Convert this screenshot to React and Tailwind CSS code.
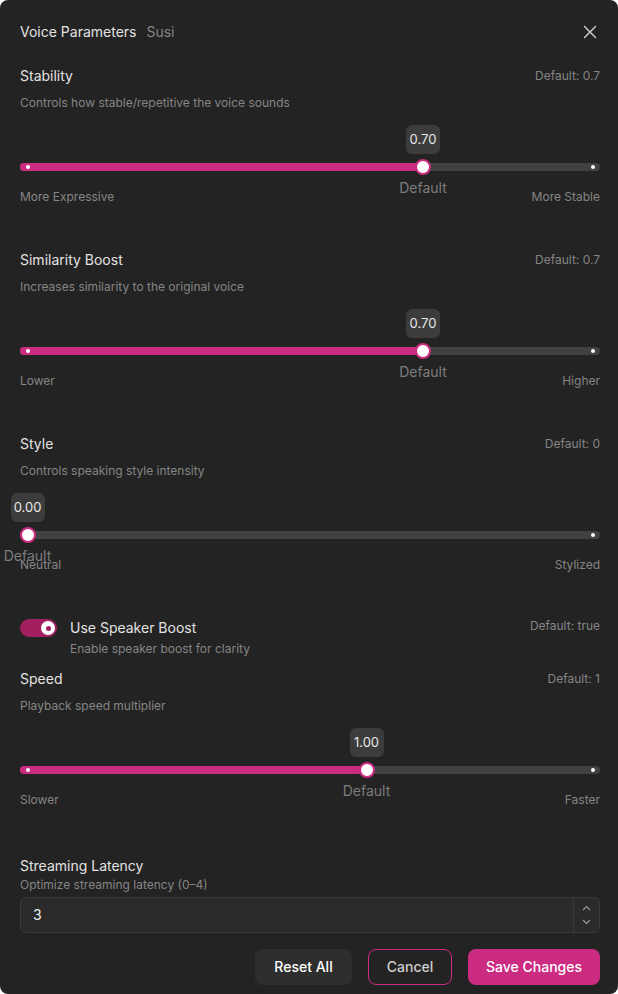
import React from "react";

const FONT = { fontFamily: "Inter, 'Noto Sans', sans-serif" };

function Slider({ frac, value, left, right }) {
  const x = 7.5 + frac * 565;
  return (
    <div className="relative mt-[14px] pt-[38px]">
      <div className="relative h-2 rounded-full bg-[#414141]">
        <div className="absolute left-0 top-0 h-2 rounded-full bg-[#cc2b82]" style={{ width: x }} />
        <div className="absolute left-[6px] top-[2px] h-1 w-1 rounded-full bg-white" />
        <div className="absolute right-[5px] top-[2px] h-1 w-1 rounded-full bg-white" />
      </div>
      <div
        className="absolute top-0 flex h-[29px] w-[34px] items-center justify-center rounded-md bg-[#3c3c3c] text-[13px] text-[#e8e8e8]"
        style={{ left: x - 17 }}
      >
        {value}
      </div>
      <div
        className="absolute top-[34px] h-4 w-4 rounded-full border-2 border-[#cc2b82] bg-white"
        style={{ left: x - 8 }}
      />
      <div
        className="absolute top-[53px] w-[60px] text-center text-sm leading-5 text-[#7c7c7c]"
        style={{ left: x - 30 }}
      >
        Default
      </div>
      <div className="mt-[18px] flex justify-between text-xs leading-4 text-[#858585]">
        <span>{left}</span>
        <span>{right}</span>
      </div>
    </div>
  );
}

function Section({ title, def, desc, frac, value, left, right }) {
  return (
    <div>
      <div className="flex h-5 items-center justify-between">
        <span className="text-sm text-[#e2e2e2]">{title}</span>
        <span className="text-xs text-[#858585]">{def}</span>
      </div>
      <div className="mt-[9px] text-xs leading-4 text-[#858585]">{desc}</div>
      <Slider frac={frac} value={value} left={left} right={right} />
    </div>
  );
}

export default function App() {
  return (
    <div style={FONT} className="min-h-[994px] w-full rounded-lg bg-[#232323] pl-5 pr-[18px] pt-[22px] pb-[9px]">
      <div className="flex h-5 items-center justify-between">
        <div className="flex items-center gap-[10px] text-sm">
          <span className="text-[#e2e2e2]">Voice Parameters</span>
          <span className="text-[#858585]">Susi</span>
        </div>
        <svg width="14" height="14" viewBox="0 0 14 14" className="mr-[3px]">
          <path d="M1.5 1.5 L12.5 12.5 M12.5 1.5 L1.5 12.5" stroke="#c8c8c8" strokeWidth="1.5" strokeLinecap="round" />
        </svg>
      </div>

      <div className="mt-6 flex flex-col gap-[45px]">
        <Section
          title="Stability"
          def="Default: 0.7"
          desc="Controls how stable/repetitive the voice sounds"
          frac={0.7}
          value="0.70"
          left="More Expressive"
          right="More Stable"
        />
        <Section
          title="Similarity Boost"
          def="Default: 0.7"
          desc="Increases similarity to the original voice"
          frac={0.7}
          value="0.70"
          left="Lower"
          right="Higher"
        />
        <Section
          title="Style"
          def="Default: 0"
          desc="Controls speaking style intensity"
          frac={0}
          value="0.00"
          left="Neutral"
          right="Stylized"
        />
        <div>
          <div className="flex items-start justify-between">
            <div className="flex items-center gap-[13px]">
              <div className="flex h-[18px] w-[37px] items-center justify-end rounded-full bg-[#a11f5f] pr-[2px]">
                <div className="flex h-[14px] w-[14px] items-center justify-center rounded-full bg-white">
                  <div className="h-[5px] w-[5px] rounded-full bg-[#a11f5f]" />
                </div>
              </div>
              <span className="text-sm leading-5 text-[#e2e2e2]">Use Speaker Boost</span>
            </div>
            <span className="text-xs leading-4 text-[#858585]">Default: true</span>
          </div>
          <div className="mt-[3px] pl-[50px] text-xs leading-4 text-[#858585]">Enable speaker boost for clarity</div>
          <div className="mt-3">
            <Section
              title="Speed"
              def="Default: 1"
              desc="Playback speed multiplier"
              frac={0.6}
              value="1.00"
              left="Slower"
              right="Faster"
            />
          </div>
        </div>
      </div>

      <div className="mt-[48px]">
        <div className="text-sm leading-5 text-[#e2e2e2]">Streaming Latency</div>
        <div className="mt-px text-xs leading-4 text-[#858585]">Optimize streaming latency (0–4)</div>
        <div className="mt-1 flex h-9 items-stretch rounded-md border border-[#3a3a3a] bg-[#2b2b2b]">
          <div className="flex flex-1 items-center pl-3 text-sm text-[#ededed]">3</div>
          <div className="flex w-[26px] flex-col items-center justify-center gap-[8px] border-l border-[#3a3a3a]">
            <svg width="9" height="6" viewBox="0 0 9 6">
              <path d="M1 5 L4.5 1.5 L8 5" fill="none" stroke="#9a9a9a" strokeWidth="1.2" />
            </svg>
            <svg width="9" height="6" viewBox="0 0 9 6">
              <path d="M1 1 L4.5 4.5 L8 1" fill="none" stroke="#9a9a9a" strokeWidth="1.2" />
            </svg>
          </div>
        </div>
        <div className="mt-4 flex justify-end gap-4">
          <button className="h-9 w-[97px] rounded-lg bg-[#2e2e2e] text-sm font-medium text-white">Reset All</button>
          <button className="h-9 w-[84px] rounded-lg border border-[#cc2b82] text-sm font-medium text-[#cfcfcf]">Cancel</button>
          <button className="h-9 w-[132px] rounded-lg bg-[#cc2b82] text-sm font-medium text-white">Save Changes</button>
        </div>
      </div>
    </div>
  );
}
